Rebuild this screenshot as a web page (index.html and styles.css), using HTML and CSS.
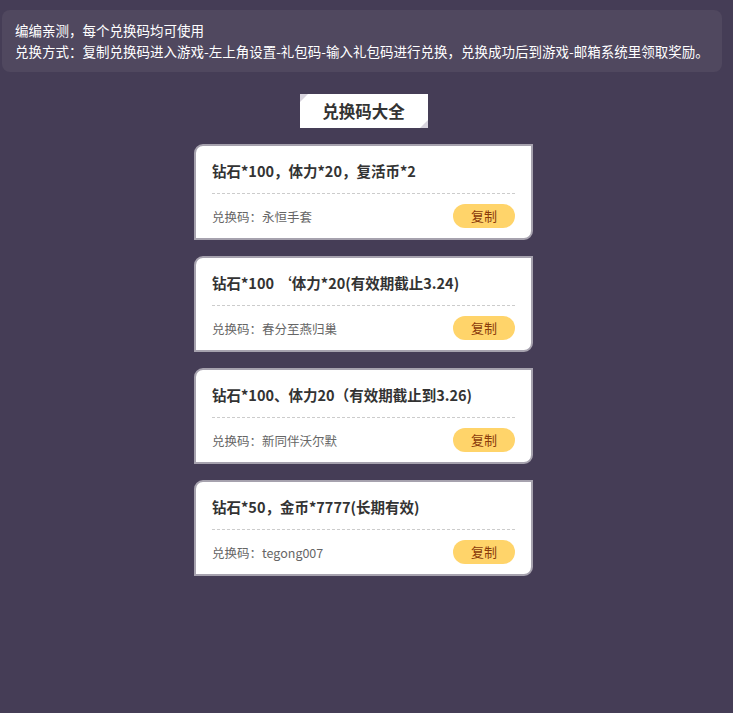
FILE: index.html
```html
<!DOCTYPE html>
<html>
<head>
<meta charset="utf-8">
<link rel="stylesheet" href="styles.css">
</head>
<body>
<div class="notice">
  <p>编编亲测，每个兑换码均可使用</p>
  <p>兑换方式：复制兑换码进入游戏-左上角设置-礼包码-输入礼包码进行兑换，兑换成功后到游戏-邮箱系统里领取奖励。</p>
</div>
<div class="heading"><span>兑换码大全</span></div>
<div class="list">
  <div class="card">
    <div class="title">钻石*100，体力*20，复活币*2</div>
    <div class="row"><span class="code">兑换码：永恒手套</span><span class="btn">复制</span></div>
  </div>
  <div class="card">
    <div class="title">钻石*100 ‘体力*20(有效期截止3.24)</div>
    <div class="row"><span class="code">兑换码：春分至燕归巢</span><span class="btn">复制</span></div>
  </div>
  <div class="card">
    <div class="title">钻石*100、体力20（有效期截止到3.26)</div>
    <div class="row"><span class="code">兑换码：新同伴沃尔默</span><span class="btn">复制</span></div>
  </div>
  <div class="card">
    <div class="title">钻石*50，金币*7777(长期有效)</div>
    <div class="row"><span class="code">兑换码：tegong007</span><span class="btn">复制</span></div>
  </div>
</div>
</body>
</html>
```
FILE: styles.css
```css
html, body {
  margin: 0;
  padding: 0;
  background: #453d56;
  font-family: "Noto Sans CJK SC", "Noto Sans", sans-serif;
}
body {
  padding: 10px 11px 0 2px;
  min-height: 713px;
  box-sizing: border-box;
}
.notice {
  background: #50485f;
  border-radius: 8px;
  padding: 10px 13px 10px 13px;
  color: #fff;
  font-size: 13.5px;
  line-height: 21px;
}
.notice p {
  margin: 0;
  white-space: nowrap;
}
.heading {
  display: flex;
  justify-content: center;
  margin-top: 22px;
}
.heading span {
  position: relative;
  display: block;
  width: 128px;
  height: 34px;
  line-height: 34px;
  background: #fff;
  text-align: center;
  font-size: 16.5px;
  font-weight: bold;
  color: #333;
  margin-left: 3px;
}
.heading span::before,
.heading span::after {
  content: "";
  position: absolute;
  width: 0;
  height: 0;
}
.heading span::before {
  left: 0;
  top: 0;
  border-top: 8px solid #d8d4de;
  border-right: 8px solid transparent;
}
.heading span::after {
  right: 0;
  bottom: 0;
  border-bottom: 8px solid #d8d4de;
  border-left: 8px solid transparent;
}
.list {
  display: flex;
  flex-direction: column;
  align-items: center;
  gap: 16px;
  margin-top: 16px;
  padding-left: 3px;
}
.card {
  width: 339px;
  height: 96px;
  box-sizing: border-box;
  background: #fff;
  border: 2px solid #a6a2ae;
  border-radius: 9px 0 9px 0;
  padding: 13px 16px 0 16px;
}
.title {
  font-size: 14.5px;
  font-weight: bold;
  color: #333;
  line-height: 24px;
  padding-bottom: 10px;
  border-bottom: 1px dashed #ccc;
  white-space: nowrap;
}
.row {
  display: flex;
  justify-content: space-between;
  align-items: center;
  margin-top: 10px;
}
.code {
  font-size: 12.5px;
  color: #666;
}
.btn {
  width: 62px;
  height: 24px;
  line-height: 24px;
  border-radius: 12px;
  background: #ffd46a;
  color: #8a3b0a;
  font-size: 13px;
  text-align: center;
}
```
